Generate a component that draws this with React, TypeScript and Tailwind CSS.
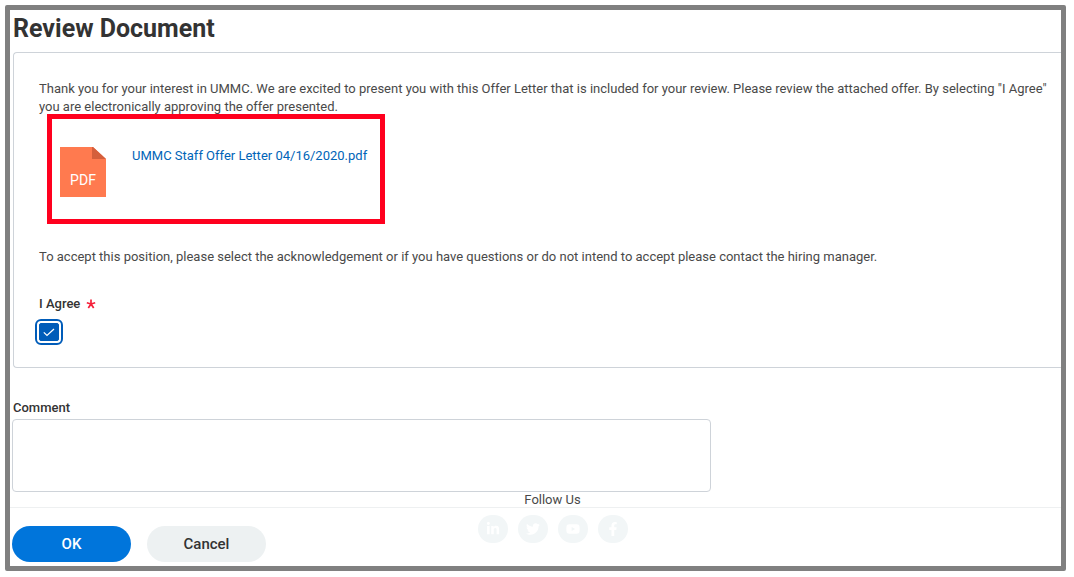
import { useState } from "react";
import type { ReactNode } from "react";
import { FaFacebookF, FaLinkedinIn, FaTwitter, FaYoutube } from "react-icons/fa";

function PdfIcon() {
  return (
    <svg width="46" height="50" viewBox="0 0 46 50" className="shrink-0" role="img" aria-label="PDF file">
      <path d="M0 0H33L46 12V50H0Z" fill="#ff7a4f" />
      <path d="M33 0L46 12H32V0Z" fill="#d45f3c" />
      <text x="23" y="38" textAnchor="middle" fontFamily="Roboto, sans-serif" fontSize="14" fill="#fff">
        PDF
      </text>
    </svg>
  );
}

function SocialLink({ label, children }: { label: string; children: ReactNode }) {
  return (
    <a
      href="#"
      aria-label={label}
      className="flex h-7 w-[30px] items-center justify-center rounded-full bg-[#f2f6f7] text-sm text-white"
    >
      {children}
    </a>
  );
}

export default function App() {
  const [agreed, setAgreed] = useState(true);
  const [comment, setComment] = useState("");

  return (
    <div className="bg-white pt-[5px] pr-2 pb-1.5 pl-[5px] font-['Roboto',sans-serif] text-[13px] leading-[18px] text-[#494949]">
      <main className="rounded-xs border-[5px] border-[#808080]">
        <h1 className="pt-px pl-[3px] text-[25px] leading-9 font-bold text-[#333]">Review Document</h1>

        <section className="mt-[5px] ml-[3px] rounded-l-[4px] border border-r-0 border-[#ced3d9] pt-[27px] pb-[26px] pl-[25px]">
          <p>
            Thank you for your interest in UMMC. We are excited to present you with this Offer Letter that is included
            for your review. Please review the attached offer. By selecting "I Agree" you are electronically approving
            the offer presented.
          </p>

          <div className="-mt-0.5 ml-2 flex h-[110px] w-[338px] items-start gap-[26px] border-[5px] border-[#ff001e] pt-7 pl-2">
            <PdfIcon />
            <a href="#" className="text-[#0064b8]">
              UMMC Staff Offer Letter 04/16/2020.pdf
            </a>
          </div>

          <p className="mt-6">
            To accept this position, please select the acknowledgement or if you have questions or do not intend to
            accept please contact the hiring manager.
          </p>

          <div className="mt-[29px]">
            <label htmlFor="agree" className="flex items-center gap-1.5 font-medium text-[#333]">
              I Agree
              <svg width="10" height="10" viewBox="0 0 10 10" aria-hidden="true">
                <path
                  d="M5 5V0.5M5 5L0.8 3.8M5 5L9.2 3.8M5 5L2.3 9M5 5L7.7 9"
                  stroke="#f5203a"
                  strokeWidth="1.7"
                  fill="none"
                />
              </svg>
            </label>
            <div className="relative mt-2.5 h-[18px] w-5">
              <input
                id="agree"
                type="checkbox"
                checked={agreed}
                onChange={(e) => setAgreed(e.target.checked)}
                className="block h-[18px] w-5 appearance-none rounded-[2px] border border-[#005cb9] outline-2 outline-offset-2 outline-[#005cb9] checked:bg-[#005cb9]"
              />
              {agreed && (
                <svg
                  viewBox="0 0 20 18"
                  className="pointer-events-none absolute inset-0 h-[18px] w-5"
                  fill="none"
                  stroke="#fff"
                  strokeWidth="1.3"
                  aria-hidden="true"
                >
                  <path d="M4.8 9.4L8 12.4L15 6" />
                </svg>
              )}
            </div>
          </div>
        </section>

        <div className="mt-[31px] pl-0.5">
          <label htmlFor="comment" className="block pl-px font-medium text-[#333]">
            Comment
          </label>
          <textarea
            id="comment"
            value={comment}
            onChange={(e) => setComment(e.target.value)}
            className="mt-0.5 block h-[73px] w-2/3 resize-none rounded-[4px] border border-[#ced3d9] px-2 py-1"
          />
        </div>

        <h2 className="pl-[34px] text-center leading-[15px]">Follow Us</h2>

        <footer className="grid grid-cols-[1fr_auto_1fr] items-start border-t border-[#eef0f1] pt-[7px] pb-1 pl-[34px]">
          <div className="mt-[11px] -ml-8 flex gap-4 text-[15px] font-medium">
            <button type="button" className="h-9 w-[119px] rounded-full bg-[#0075db] text-white">
              OK
            </button>
            <button type="button" className="h-9 w-[119px] rounded-full bg-[#edf1f2] text-[#333]">
              Cancel
            </button>
          </div>
          <nav aria-label="Follow Us" className="flex gap-2.5">
            <SocialLink label="LinkedIn">
              <FaLinkedinIn />
            </SocialLink>
            <SocialLink label="Twitter">
              <FaTwitter />
            </SocialLink>
            <SocialLink label="YouTube">
              <FaYoutube />
            </SocialLink>
            <SocialLink label="Facebook">
              <FaFacebookF />
            </SocialLink>
          </nav>
        </footer>
      </main>
    </div>
  );
}
